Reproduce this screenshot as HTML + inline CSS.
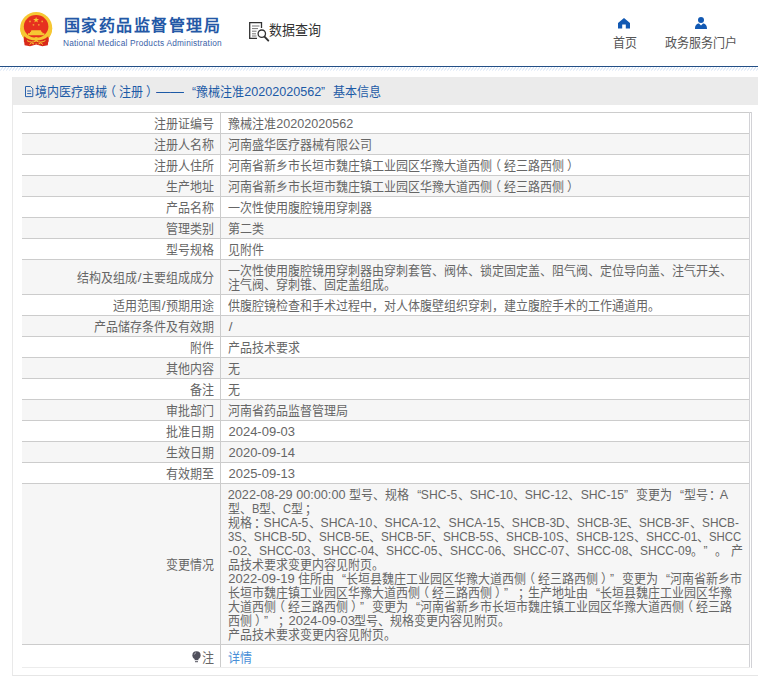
<!DOCTYPE html>
<html lang="zh-CN">
<head>
<meta charset="utf-8">
<title>国家药品监督管理局 数据查询</title>
<style>
html,body{margin:0;padding:0;background:#fff;}
body{width:758px;height:678px;overflow:hidden;position:relative;font-family:"Liberation Sans",sans-serif;font-size:12px;line-height:14px;color:#666;}
.abs{position:absolute;}
b,i{font-weight:normal;font-style:normal;}
.e{letter-spacing:0;display:inline-block;white-space:nowrap;height:12px;line-height:12px;vertical-align:baseline;}
.e i{display:inline-block;white-space:nowrap;font-size:12px;line-height:12px;transform-origin:0 50%;}
.e.c{text-align:center;}
.e.c i{transform-origin:50% 50%;}
.q1,.q2{letter-spacing:0;font-size:12px;display:inline-block;width:12px;height:12px;line-height:12px;}
.pl{position:relative;left:-3px;}
.pr{position:relative;left:2.5px;}
.pc{position:relative;left:1.5px;}
.q1{text-align:right;}
.q2{text-align:left;}
#logo-cn{position:absolute;left:63.5px;top:14.5px;font-size:16px;letter-spacing:1.55px;font-weight:bold;color:#2458a6;white-space:nowrap;line-height:22px;}
#logo-en{position:absolute;left:63px;top:37.8px;font-size:8.3px;letter-spacing:.2px;color:#3a62a8;white-space:nowrap;line-height:11px;}
#dq{position:absolute;left:269px;top:21.6px;font-size:13px;transform:scaleY(1.07);transform-origin:0 78%;color:#333;white-space:nowrap;line-height:18px;}
.nav{position:absolute;top:36px;font-size:12px;transform:scaleY(1.06);transform-origin:50% 78%;color:#555;white-space:nowrap;line-height:14px;text-align:center;}
#blueline{position:absolute;left:0;top:66px;width:758px;height:1px;background:#234f86;}
#hatch{position:absolute;left:0;top:67px;width:758px;height:3px;background:repeating-linear-gradient(135deg,#c4d8f2 0,#c4d8f2 .75px,#fff .75px,#fff 2.12px);opacity:.8;}
#box{position:absolute;left:12px;top:77px;width:760px;height:599px;border-left:1px solid #e9e9e9;border-bottom:1px solid #e6e6e6;box-sizing:border-box;background:#fff;}
#boxhd{position:absolute;left:0;top:0;width:760px;height:28px;background:#ebebeb;}
#boxtitle{position:absolute;left:35px;top:85px;line-height:14px;color:#1c5aa6;white-space:nowrap;font-size:12px;transform:scaleY(1.06);transform-origin:0 78%;}
.row{position:absolute;left:22px;width:728px;border-top:1px solid #ccc;box-sizing:border-box;background:#fff;}
.row.g{background:#f6f6f6;}
.l{transform:scaleY(1.06);transform-origin:50% 78%;position:absolute;left:0;width:192px;text-align:right;white-space:nowrap;line-height:14px;height:14px;}
.v{transform:scaleY(1.06);transform-origin:50% 78%;position:absolute;left:206px;white-space:nowrap;line-height:14px;height:14px;}
a{color:#4a8fd8;text-decoration:none;}
.bulb{position:relative;top:1px;margin-right:2px;vertical-align:baseline;}
</style>
</head>
<body>
<div id="hdr">
  <svg class="abs" style="left:16px;top:8px" width="42" height="42" viewBox="16 8 42 42">
    <circle cx="36.2" cy="28" r="16" fill="#f6c733"/>
    <path d="M23.6 37.5 L24.6 45.2 L30 46.2 L36.2 44.6 L42.4 46.2 L47.8 45.2 L48.8 37.5 L44 41 L36.2 42.6 L28.4 41 Z" fill="#d9291a"/>
    <path d="M20.2 28 A16 16 0 0 0 52.2 28 L49 28 A12.8 12.8 0 0 1 23.4 28 Z" fill="#f6c733"/>
    <path d="M24.2 36.2 C27.5 39.6 31.5 40.4 36.2 40.4 C40.9 40.4 44.9 39.6 48.2 36.2 L48.6 41.4 C45 44.4 41 45.4 36.2 43.6 C31.4 45.4 27.4 44.4 23.8 41.4 Z" fill="#d9291a"/>
    <ellipse cx="36.1" cy="26.4" rx="12.3" ry="11.3" fill="#e6301f"/>
    <path d="M27 40.6 C30 42.4 33 42.6 36.2 41 C39.4 42.6 42.4 42.4 45.4 40.6" stroke="#f6c733" stroke-width="1" fill="none"/>
    <circle cx="36.2" cy="39" r="1.9" fill="#f6c733"/>
    <path d="M29.5 44.6 L31.5 42.8 L34 44 M42.9 44.6 L40.9 42.8 L38.4 44" stroke="#f6c733" stroke-width="1" fill="none"/>
    <path d="M31.4 30.2 H40.9 L41.6 32 H30.7 Z M28 33.2 H44.4 V35.2 H28 Z M30 32 H42.4 V33.4 H30 Z" fill="#f6c733"/>
    <path d="M36.1 17 l.75 2.1 h2.2 l-1.8 1.35 .7 2.1 -1.85-1.3 -1.85 1.3 .7-2.1 -1.8-1.35 h2.2z" fill="#f6c733"/>
    <circle cx="30" cy="21.4" r=".9" fill="#f0a030"/><circle cx="42.2" cy="21.4" r=".9" fill="#f0a030"/>
    <circle cx="33.5" cy="24.8" r=".9" fill="#f0a030"/><circle cx="38.8" cy="24.8" r=".9" fill="#f0a030"/>
  </svg>
  <div id="logo-cn">国家药品监督管理局</div>
  <div id="logo-en">National Medical Products Administration</div>
  <svg class="abs" style="left:248px;top:21px" width="22" height="21" viewBox="0 0 22 21" fill="none" stroke="#333" stroke-width="1.3">
    <path d="M13.5 7 V1.7 H1.7 V17.3 H9"/>
    <path d="M4 5 H11.5 M4 7.6 H10 M4 10.2 H8.5 M4 12.8 H8 M4 15 H8.5" stroke="#777" stroke-width="1"/>
    <circle cx="13.8" cy="12.7" r="3.7" fill="#fff"/>
    <path d="M16.5 15.6 L20.3 19.6" stroke-width="1.9" stroke-linecap="round"/>
  </svg>
  <div id="dq">数据查询</div>
  <svg class="abs" style="left:618px;top:18px" width="12" height="11" viewBox="0 0 12 11"><path d="M6 0 L12 5 V10.5 H7.8 V6.6 H4.2 V10.5 H0 V5 Z" fill="#1259b3"/></svg>
  <div class="nav" style="left:600px;width:49px;">首页</div>
  <svg class="abs" style="left:695px;top:17px" width="12" height="12" viewBox="0 0 12 12"><circle cx="6" cy="3" r="3" fill="#1259b3"/><path d="M0 12 C0 8 2 6.6 4 6.6 L6 8.6 L8 6.6 C10 6.6 12 8 12 12 Z" fill="#1259b3"/></svg>
  <div class="nav" style="left:650px;width:101px;">政务服务门户</div>
</div>
<div id="blueline"></div>
<svg class="abs" style="left:0;top:67px" width="758" height="4"><defs><pattern id="ht" width="3" height="4" patternUnits="userSpaceOnUse"><path d="M3 0 L0.3 3.6" stroke="#bcd0ee" stroke-width=".7"/></pattern></defs><rect width="758" height="4" fill="url(#ht)"/></svg>
<div id="box"><div id="boxhd"></div></div>
<svg class="abs" style="left:24.5px;top:85.5px" width="9" height="12" viewBox="0 0 9 12" fill="none" stroke="#2a62ac" stroke-width="1"><path d="M0.5 0.5 H5.5 L7.8 2.8 V10.6 H0.5 Z"/><path d="M2.2 5 H6.2 M2.2 7.6 H6.2"/></svg>
<div id="boxtitle">境内医疗器械<b class="pl">（</b>注册<b class="pr">）</b><b class="e" style="width:29px;text-align:right"><i style="font-size:12px;transform:scaleX(1.1667);transform-origin:100% 50%">——</i></b><b class="q1">“</b>豫械注准<b class="e c" style="width:77.09px"><i style="transform:scaleX(1.0499)">20202020562</i></b><b class="q2">”</b>基本信息</div>
<div class="row" style="top:112px;height:21px">
<div class="l" style="top:4px">注册证编号</div>
<div class="v" style="top:4px">豫械注准<b class="e c" style="width:77.09px"><i style="transform:scaleX(1.0499)">20202020562</i></b></div>
</div>
<div class="row g" style="top:133px;height:21px">
<div class="l" style="top:4px">注册人名称</div>
<div class="v" style="top:4px">河南盛华医疗器械有限公司</div>
</div>
<div class="row" style="top:154px;height:21px">
<div class="l" style="top:4px">注册人住所</div>
<div class="v" style="top:4px">河南省新乡市长垣市魏庄镇工业园区华豫大道西侧<b class="pl">（</b>经三路西侧<b class="pr">）</b></div>
</div>
<div class="row g" style="top:175px;height:21px">
<div class="l" style="top:4px">生产地址</div>
<div class="v" style="top:4px">河南省新乡市长垣市魏庄镇工业园区华豫大道西侧<b class="pl">（</b>经三路西侧<b class="pr">）</b></div>
</div>
<div class="row" style="top:196px;height:21px">
<div class="l" style="top:4px">产品名称</div>
<div class="v" style="top:4px">一次性使用腹腔镜用穿刺器</div>
</div>
<div class="row g" style="top:217px;height:21px">
<div class="l" style="top:4px">管理类别</div>
<div class="v" style="top:4px">第二类</div>
</div>
<div class="row" style="top:238px;height:21px">
<div class="l" style="top:4px">型号规格</div>
<div class="v" style="top:4px">见附件</div>
</div>
<div class="row g" style="top:259px;height:35px">
<div class="l" style="top:11px">结构及组成<b class="e c" style="width:5.07px"><i style="transform:scaleX(1.1200)">/</i></b>主要组成成分</div>
<div class="v" style="top:4px">一次性使用腹腔镜用穿刺器由穿刺套管、阀体、锁定固定盖、阻气阀、定位导向盖、注气开关、</div>
<div class="v" style="top:18px">注气阀、穿刺锥、固定盖组成。</div>
</div>
<div class="row" style="top:294px;height:21px">
<div class="l" style="top:4px">适用范围<b class="e c" style="width:5.07px"><i style="transform:scaleX(1.1200)">/</i></b>预期用途</div>
<div class="v" style="top:4px">供腹腔镜检查和手术过程中，对人体腹壁组织穿刺，建立腹腔手术的工作通道用。</div>
</div>
<div class="row g" style="top:315px;height:21px">
<div class="l" style="top:4px">产品储存条件及有效期</div>
<div class="v" style="top:4px"><b class="e c" style="width:5.07px"><i style="transform:scaleX(1.1200)">/</i></b></div>
</div>
<div class="row" style="top:336px;height:21px">
<div class="l" style="top:4px">附件</div>
<div class="v" style="top:4px">产品技术要求</div>
</div>
<div class="row g" style="top:357px;height:21px">
<div class="l" style="top:4px">其他内容</div>
<div class="v" style="top:4px">无</div>
</div>
<div class="row" style="top:378px;height:21px">
<div class="l" style="top:4px">备注</div>
<div class="v" style="top:4px">无</div>
</div>
<div class="row g" style="top:399px;height:21px">
<div class="l" style="top:4px">审批部门</div>
<div class="v" style="top:4px">河南省药品监督管理局</div>
</div>
<div class="row" style="top:420px;height:21px">
<div class="l" style="top:4px">批准日期</div>
<div class="v" style="top:4px"><b class="e c" style="width:66.46px"><i style="transform:scaleX(1.0826)">2024-09-03</i></b></div>
</div>
<div class="row g" style="top:441px;height:21px">
<div class="l" style="top:4px">生效日期</div>
<div class="v" style="top:4px"><b class="e c" style="width:66.46px"><i style="transform:scaleX(1.0826)">2020-09-14</i></b></div>
</div>
<div class="row" style="top:462px;height:21px">
<div class="l" style="top:4px">有效期至</div>
<div class="v" style="top:4px"><b class="e c" style="width:66.46px"><i style="transform:scaleX(1.0826)">2025-09-13</i></b></div>
</div>
<div class="row g" style="top:483px;height:161px">
<div class="l" style="top:74px">变更情况</div>
<div class="v" style="top:4px"><b class="e c" style="width:121.27px"><i style="transform:scaleX(1.0566)">2022-08-29&nbsp;00:00:00&nbsp;</i></b>型号、规格<b class="q1">“</b><b class="e c" style="width:36.40px"><i style="transform:scaleX(1.0106)">SHC-5</i></b>、<b class="e c" style="width:43.41px"><i style="transform:scaleX(1.0168)">SHC-10</i></b>、<b class="e c" style="width:43.41px"><i style="transform:scaleX(1.0168)">SHC-12</i></b>、<b class="e c" style="width:43.41px"><i style="transform:scaleX(1.0168)">SHC-15</i></b><b class="q2">”</b>变更为<b class="q1">“</b>型号<b class="pc">：</b><b class="e c" style="width:8.39px"><i style="transform:scaleX(1.0461)">A</i></b></div>
<div class="v" style="top:18px">型、<b class="e" style="width:7.45px"><i style="transform:scaleX(0.9297)">B</i></b>型、<b class="e" style="width:8.06px"><i style="transform:scaleX(0.9296)">C</i></b>型<b class="pc">；</b></div>
<div class="v" style="top:32px">规格<b class="pc">：</b><b class="e c" style="width:44.78px"><i style="transform:scaleX(1.0174)">SHCA-5</i></b>、<b class="e c" style="width:51.79px"><i style="transform:scaleX(1.0218)">SHCA-10</i></b>、<b class="e c" style="width:51.79px"><i style="transform:scaleX(1.0218)">SHCA-12</i></b>、<b class="e c" style="width:51.79px"><i style="transform:scaleX(1.0218)">SHCA-15</i></b>、<b class="e c" style="width:52.96px"><i style="transform:scaleX(1.0053)">SHCB-3D</i></b>、<b class="e" style="width:50.43px"><i style="transform:scaleX(0.9694)">SHCB-3E</i></b>、<b class="e" style="width:50.20px"><i style="transform:scaleX(0.9777)">SHCB-3F</i></b>、<b class="e" style="width:36.84px"><i style="transform:scaleX(0.9866)">SHCB-</i></b></div>
<div class="v" style="top:46px"><b class="e" style="width:13.91px"><i style="transform:scaleX(0.9469)">3S</i></b>、<b class="e c" style="width:52.96px"><i style="transform:scaleX(1.0053)">SHCB-5D</i></b>、<b class="e" style="width:50.43px"><i style="transform:scaleX(0.9694)">SHCB-5E</i></b>、<b class="e" style="width:50.20px"><i style="transform:scaleX(0.9777)">SHCB-5F</i></b>、<b class="e" style="width:50.75px"><i style="transform:scaleX(0.9757)">SHCB-5S</i></b>、<b class="e" style="width:57.76px"><i style="transform:scaleX(0.9842)">SHCB-10S</i></b>、<b class="e" style="width:57.76px"><i style="transform:scaleX(0.9842)">SHCB-12S</i></b>、<b class="e c" style="width:51.47px"><i style="transform:scaleX(1.0021)">SHCC-01</i></b>、<b class="e" style="width:32.25px"><i style="transform:scaleX(0.9482)">SHCC</i></b></div>
<div class="v" style="top:60px"><b class="e c" style="width:19.21px"><i style="transform:scaleX(1.1079)">-02</i></b>、<b class="e c" style="width:51.47px"><i style="transform:scaleX(1.0021)">SHCC-03</i></b>、<b class="e c" style="width:51.47px"><i style="transform:scaleX(1.0021)">SHCC-04</i></b>、<b class="e c" style="width:51.47px"><i style="transform:scaleX(1.0021)">SHCC-05</i></b>、<b class="e c" style="width:51.47px"><i style="transform:scaleX(1.0021)">SHCC-06</i></b>、<b class="e c" style="width:51.47px"><i style="transform:scaleX(1.0021)">SHCC-07</i></b>、<b class="e c" style="width:51.47px"><i style="transform:scaleX(1.0021)">SHCC-08</i></b>、<b class="e c" style="width:51.47px"><i style="transform:scaleX(1.0021)">SHCC-09</i></b>。<b class="q2">”</b>。<b class="e c" style="width:3.56px"><i style="transform:scaleX(1.0650)">&nbsp;</i></b>产</div>
<div class="v" style="top:74px">品技术要求变更内容见附页。</div>
<div class="v" style="top:88px"><b class="e c" style="width:70.02px"><i style="transform:scaleX(1.0819)">2022-09-19&nbsp;</i></b>住所由<b class="q1">“</b>长垣县魏庄工业园区华豫大道西侧<b class="pl">（</b>经三路西侧<b class="pr">）</b><b class="q2">”</b>变更为<b class="q1">“</b>河南省新乡市</div>
<div class="v" style="top:102px">长垣市魏庄镇工业园区华豫大道西侧<b class="pl">（</b>经三路西侧<b class="pr">）</b><b class="q2">”</b><b class="pc">；</b>生产地址由<b class="q1">“</b>长垣县魏庄工业园区华豫</div>
<div class="v" style="top:116px">大道西侧<b class="pl">（</b>经三路西侧<b class="pr">）</b><b class="q2">”</b>变更为<b class="q1">“</b>河南省新乡市长垣市魏庄镇工业园区华豫大道西侧<b class="pl">（</b>经三路</div>
<div class="v" style="top:130px">西侧<b class="pr">）</b><b class="q2">”</b><b class="pc">；</b><b class="e c" style="width:66.46px"><i style="transform:scaleX(1.0826)">2024-09-03</i></b>型号、规格变更内容见附页。</div>
<div class="v" style="top:144px">产品技术要求变更内容见附页。</div>
</div>
<div class="row" style="top:644px;height:23px">
<svg class="abs" style="left:169.5px;top:6px" width="9" height="12" viewBox="0 0 9 12"><circle cx="4.5" cy="4.3" r="4.1" fill="#50505c"/><path d="M2.6 7.6h3.8v1.6h-3.8z" fill="#50505c"/><path d="M3 10.2h3v1h-3z" fill="#50505c"/><path d="M2.3 3.6a2.4 2.4 0 0 1 1.8-1.9" stroke="#c8c8d0" stroke-width=".8" fill="none"/></svg>
<div class="l" style="top:5.5px">注</div>
<div class="v" style="top:5.5px"><a>详情</a></div>
</div>
<div class="abs" style="left:220px;top:112px;width:1px;height:556px;background:#ccc"></div>
<div class="abs" style="left:749px;top:112px;width:1px;height:556px;background:#d2d2d6"></div>
<div class="abs" style="left:750px;top:113px;width:1px;height:555px;background:#fff"></div>
<div class="abs" style="left:750px;top:112px;width:2px;height:1px;background:#ccc"></div>
<div class="abs" style="left:751px;top:112px;width:1px;height:556px;background:#d2d2d6"></div>
<div class="abs" style="left:22px;top:667px;width:728px;height:1px;background:#ececec"></div>
</body>
</html>
